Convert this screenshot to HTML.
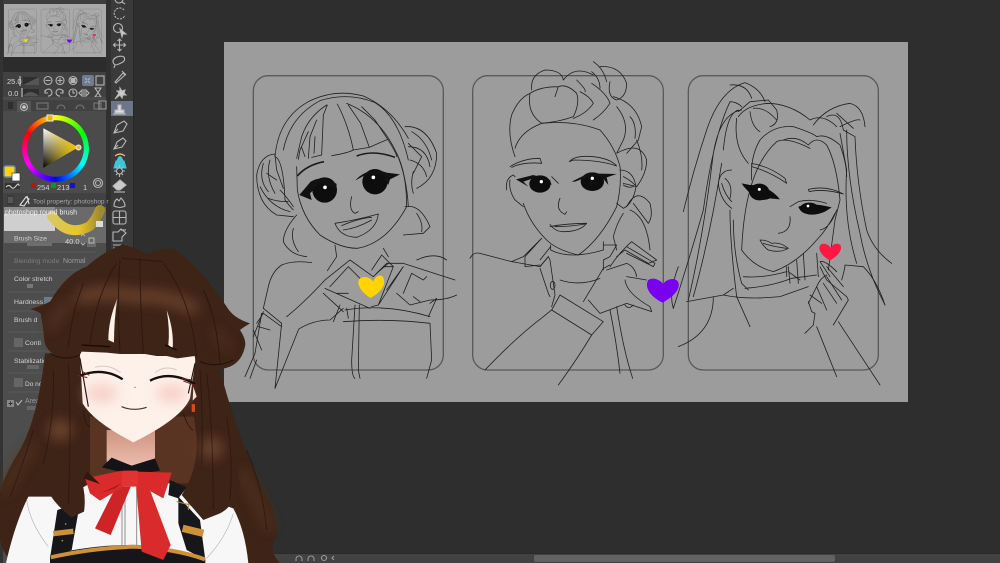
<!DOCTYPE html>
<html><head><meta charset="utf-8"><style>
html,body{margin:0;padding:0;background:#2e2e2e;width:1000px;height:563px;overflow:hidden}
svg{display:block;position:absolute;left:0;top:0;filter:blur(.3px)}
text{font-family:"Liberation Sans",sans-serif}
.l{fill:none;stroke:#1f1f1f;stroke-width:2.4;stroke-linecap:round;stroke-linejoin:round}
.f{fill:none;stroke:#5a5a5a;stroke-width:4}
.i{fill:none;stroke:#b4b4b4;stroke-width:1.1}
.t{fill:#d2d2d2;font-size:6.800px}
.h{fill:#3e2317}
</style></head><body>
<svg width="1000" height="563" viewBox="0 0 1000 563" xmlns="http://www.w3.org/2000/svg">
<defs>
<filter id="b2" filterUnits="userSpaceOnUse" x="-300" y="-300" width="1600" height="1600"><feGaussianBlur stdDeviation="10"/></filter>
<filter id="b3" filterUnits="userSpaceOnUse" x="-300" y="-300" width="1600" height="1600"><feGaussianBlur stdDeviation="20"/></filter>
<linearGradient id="tw" x1="0" y1="0" x2="0" y2="1"><stop offset="0" stop-color="#fff"/><stop offset="1" stop-color="#000"/></linearGradient>
<linearGradient id="ty" x1="0" y1="0" x2="1" y2="0"><stop offset="0" stop-color="#f5c800" stop-opacity="0"/><stop offset="1" stop-color="#f5c800"/></linearGradient>
<linearGradient id="neck" x1="0" y1="0" x2="0" y2="1"><stop offset="0" stop-color="#cf9482"/><stop offset="1" stop-color="#eebfae"/></linearGradient>
<linearGradient id="sw" x1="0" y1="0" x2="1" y2="0"><stop offset="0" stop-color="#d9c860"/><stop offset=".55" stop-color="#e8c52a"/><stop offset="1" stop-color="#a08c30"/></linearGradient>
</defs>

<rect width="1000" height="563" fill="#2e2e2e"/>
<rect x="0" y="0" width="133" height="563" fill="#3a3a3a"/>
<rect x="0" y="0" width="3" height="563" fill="#333"/>
<rect x="106" y="0" width="5" height="563" fill="#303030"/>
<rect x="133" y="0" width="1" height="563" fill="#262626"/>

<!-- navigator -->
<rect x="3" y="0" width="103" height="4" fill="#3d3d3d"/>
<rect x="4" y="4" width="102" height="53" fill="#a9a9a9"/>
<rect x="3" y="57" width="103" height="15" fill="#2c2c2c"/>
<g transform="translate(4,4) scale(.149) translate(-224,-42)"><use href="#art"/></g>

<!-- brush controls -->
<rect x="3" y="72" width="103" height="25" fill="#414141"/>
<rect x="23" y="77" width="16" height="8" fill="#2e2e2e"/><path d="M23 85L39 77V85Z" fill="#555"/>
<rect x="23" y="89" width="16" height="7" fill="#2e2e2e"/><path d="M23 96Q30 88 39 96Z" fill="#555"/>
<rect x="19" y="76" width="2" height="10" fill="#888"/><rect x="21" y="88" width="2" height="10" fill="#888"/>
<text x="7" y="84" fill="#d8d8d8" font-size="7.500">25.0</text>
<text x="8" y="96" fill="#d8d8d8" font-size="7.500">0.0</text>
<g class="i">
<circle cx="48" cy="80.500" r="4"/><path d="M45.500 80.500h5"/>
<circle cx="60" cy="80.500" r="4"/><path d="M57.500 80.500h5M60 78v5"/>
<circle cx="73" cy="80.500" r="4"/><rect x="71" y="78.500" width="4" height="4" fill="#b4b4b4"/>
<path d="M45 93a3.500 3.500 0 1 1 3 3M45 90v3h3M63 93a3.500 3.500 0 1 0-3 3M63 90v3h-3"/>
<circle cx="73" cy="93" r="4"/><path d="M73 90v3h2"/>
<path d="M84 89v8M82 90l-3 3 3 3zM86 90l3 3-3 3z"/>
<path d="M95 88h6l-6 9h6z"/>
<rect x="96" y="76" width="8" height="9"/>
</g>
<rect x="82" y="75" width="12" height="11" rx="2" fill="#6f7b91"/>
<path d="M85 78l2 2M90 78l-2 2M85 83l2-2M90 83l-2-2" class="i"/>

<!-- color panel -->
<rect x="3" y="97" width="103" height="96" fill="#4b4b4b"/>
<rect x="3" y="100" width="103" height="11" fill="#414141"/>
<rect x="8" y="102" width="5" height="7" fill="#2e2e2e"/>
<rect x="17" y="101" width="14" height="11" fill="#555"/><circle cx="24" cy="107" r="3.500" class="i"/><circle cx="24" cy="107" r="1.800" fill="#ccc"/>
<rect x="37" y="103" width="11" height="6" class="i" style="stroke:#777"/>
<path d="M57 109a4 4 0 0 1 8 0M76 109a4 4 0 0 1 8 0" class="i" style="stroke:#777"/>
<rect x="94" y="103" width="7" height="6" class="i" style="stroke:#777"/>
<rect x="99" y="101" width="7" height="8" class="i" style="stroke:#999"/>
<foreignObject x="22" y="115" width="67" height="67"><div xmlns="http://www.w3.org/1999/xhtml" style="width:67px;height:67px;border-radius:50%;background:conic-gradient(from 0deg,#ff0 0deg,#0f0 60deg,#0ff 120deg,#00f 180deg,#f0f 240deg,#f00 300deg,#ff0 360deg);-webkit-mask:radial-gradient(circle,transparent 28px,#000 28.500px);mask:radial-gradient(circle,transparent 28px,#000 28.500px)"></div></foreignObject>
<path d="M43.300 128.300L78.300 147.300L43.300 167.700Z" fill="url(#tw)"/>
<path d="M43.300 128.300L78.300 147.300L43.300 167.700Z" fill="url(#ty)"/>
<rect x="47" y="115" width="6" height="6" fill="#e8b800" stroke="#eee" stroke-width="1"/>
<circle cx="78.500" cy="147.500" r="2.500" fill="#f0c400" stroke="#eee" stroke-width="1"/>
<rect x="4" y="166" width="11" height="11" rx="2" fill="#ffd400" stroke="#7d89a0" stroke-width="1.500"/>
<rect x="12" y="173" width="8" height="8" fill="#fff" stroke="#333" stroke-width=".7"/>
<rect x="5" y="183" width="15" height="6" fill="#333"/><path d="M6 187q3-3 5 0t5-1 3 0" stroke="#ddd" fill="none" stroke-width="1"/>
<rect x="31" y="183" width="5" height="5" fill="#c01010"/><text x="37" y="190" class="t" style="font-size:7.500px">254</text>
<rect x="51" y="183" width="5" height="5" fill="#0a9a1a"/><text x="57" y="190" class="t" style="font-size:7.500px">213</text>
<rect x="70" y="183" width="5" height="5" fill="#1414c0"/><text x="83" y="190" class="t" style="font-size:7.500px">1</text>
<circle cx="98" cy="183" r="4.500" class="i"/><circle cx="98" cy="183" r="2.500" class="i"/>

<!-- tool property -->
<rect x="3" y="193" width="103" height="370" fill="#4d4d4d"/>
<rect x="3" y="193" width="103" height="14" fill="#424242"/>
<rect x="7" y="195" width="7" height="10" fill="#3a3a3a"/><path d="M8 198h5M8 200h5M8 202h5" stroke="#888" stroke-width=".7"/>
<path d="M20 205l6-8 3 2-5 7zM27 196l2 8" class="i" style="stroke:#ddd"/>
<text x="33" y="203.500" fill="#a8a8a8" font-size="6.500">Tool property: photoshop r</text>
<rect x="4" y="207" width="102" height="36" fill="#6a6a6a"/>
<rect x="4" y="207" width="51" height="7" fill="#8d8d8d"/>
<rect x="4" y="214" width="51" height="17" fill="#cfcfcf"/>
<path d="M52 216Q68 238 90 226Q96 220 100 210" fill="none" stroke="url(#sw)" stroke-width="10" stroke-linecap="round"/>
<text x="5" y="214.500" fill="#eee" font-size="7">photoshop round  brush</text>
<rect x="96" y="221" width="7" height="6" fill="#ddd"/>
<text x="14" y="240.500" class="t">Brush Size</text>
<rect x="27" y="243" width="25" height="3" fill="#6e6e6e"/>
<text x="65" y="244" class="t" style="font-size:7.500px">40.0</text>
<path d="M81 236l2-2 2 2M81 243l2 2 2-2" class="i"/>
<rect x="87" y="234" width="9" height="13" fill="#6a6a6a"/><rect x="89" y="238" width="5" height="5" class="i"/>
<path d="M8 252H96M8 270H96M8 292H96M8 311H96M8 332H96M8 351H96M8 373H96M8 392H96" stroke="#5e5e5e" stroke-width=".8"/>
<text x="14" y="263" fill="#7d7d7d" font-size="6.800">Blending mode</text>
<text x="63" y="263" fill="#9a9a9a" font-size="7">Normal</text>
<text x="14" y="281" class="t">Color stretch</text>
<rect x="27" y="284" width="6" height="4" fill="#777"/>
<text x="14" y="304" class="t">Hardness</text>
<rect x="44" y="297" width="9" height="8" fill="#6f7b91"/>
<text x="14" y="322" class="t">Brush d</text>
<rect x="14" y="338" width="9" height="9" fill="#666"/>
<text x="25" y="345" class="t">Conti</text>
<text x="14" y="363" class="t">Stabilization</text>
<rect x="27" y="365" width="12" height="4" fill="#666"/>
<rect x="14" y="378" width="9" height="9" fill="#666"/>
<text x="25" y="386" class="t" style="font-size:6.500px">Do not r</text>
<rect x="7" y="400" width="7" height="7" fill="#888"/><path d="M8.500 403.500h4M10.500 401.500v4" stroke="#333"/>
<path d="M16 402l2 3 4-5" class="i"/>
<text x="25" y="403" fill="#999" font-size="7">Area</text>
<rect x="27" y="406" width="12" height="4" fill="#666"/>

<!-- tool strip -->
<rect x="111" y="101" width="22" height="15" fill="#6c7589"/>
<g class="i" style="stroke-width:1.100;stroke:#b8b8b8">
<circle cx="119" cy="-1" r="4"/><path d="M122 2l3 2"/>
<path d="M124 10a5.500 5.500 0 1 0 1 5" stroke-dasharray="2 1.200"/>
<circle cx="118" cy="28" r="4.500"/><path d="M120 29l6 5-3 0-1 3z" fill="#ccc"/>
<path d="M119.500 39v12M113.500 45h12M117.500 41l2-2 2 2M117.500 49l2 2 2-2M115.500 43l-2 2 2 2M123.500 43l2 2-2 2"/>
<path d="M115 65q-4-4 0-7 5-3 9-1 2 4-3 6-4 2-6 2zM115 65l-1 3"/>
<path d="M115 82l8-9 2 2-9 8zM122 71l4 4"/>
<path d="M120 88l2 3 3-1-1 3 2 2-3 0-1 3-2-3-5 4 4-6-2-2 3 0z" fill="#ccc"/>
<path d="M115 113h9v-3h-3v-5h-3v5h-3z" fill="#ddd"/><path d="M113 114h13"/>
<path d="M114 133l3-8 7-4 3 3-4 7zM114 133l4-4"/>
<path d="M114 149l3-7 6-4 3 3-4 6zM114 149l4-4"/>
<path d="M114 168h12l-2-7h-8zM117 161q3-9 6 0" fill="#3ec6d8" style="stroke:#3ec6d8"/><path d="M115 156q5-4 10 0" style="stroke:#e8d060"/>
<circle cx="119.500" cy="171" r="3"/><path d="M119.500 165v3M119.500 174v3M114 171h3M122 171h3M116 167l2 2M123 167l-2 2M116 175l2-2M123 175l-2-2"/>
<path d="M113 186l7-6 6 5-6 5h-3z" fill="#ccc"/><path d="M114 192h11"/>
<path d="M114 206q0-5 3-7l2 2 2-3q4 4 4 8-5 3-11 0z"/>
<rect x="113" y="211" width="13" height="13" rx="2"/><path d="M113 217.500h13M119.500 211v13"/>
<path d="M113 238v-6h5l3-3 5 4-4 4v4h-9z"/><path d="M121 230h5"/>
</g>
<path d="M113 245h13M113 248h13" class="i"/>

<!-- canvas -->
<rect x="224" y="42" width="684" height="360" fill="#9c9c9c"/>

<g id="art">
<!-- FIGURE 1 -->
<g transform="translate(240,60) scale(.33333)">
<rect class="f" x="40" y="47" width="570" height="883" rx="45"/>
<g class="l">
<path d="M105 290Q115 175 205 125Q285 85 370 108Q455 145 505 235"/>
<path d="M130 270Q150 170 240 122Q325 95 405 128Q475 170 505 300"/>
<path d="M170 320L172 390Q185 470 240 525Q300 565 352 565Q440 550 500 440Q500 340 470 280"/>
<path d="M170 295L185 230Q205 170 260 135M320 130Q420 170 470 280"/>
<path d="M175 298L180 270L205 215M205 295L210 230L230 180M215 292L245 285L250 165L262 135M275 287Q320 280 340 270Q325 195 292 132M340 270L388 262L362 190L325 135M388 262L443 238L405 180L365 140M443 238Q470 280 470 290"/>
<path d="M185 262L195 290M225 230L222 280"/>
<path d="M105 290Q130 300 135 420Q150 440 160 450M470 280Q500 350 505 440"/>
<path d="M105 282Q60 285 50 345Q50 430 110 465L160 470"/>
<path d="M70 310Q55 360 85 395M90 300Q75 350 105 400M60 380Q90 440 150 455M120 390Q140 410 160 440M105 285L110 330L130 385M80 340L110 360M85 415Q110 425 145 425"/>
<path d="M495 200Q560 195 590 280Q590 355 530 385"/>
<path d="M515 215Q560 240 575 300M505 260Q560 260 570 320M510 300Q550 310 560 350M505 250L545 290L520 340M520 335Q510 370 520 400"/>
<path d="M170 465Q130 510 130 545Q150 585 200 590M160 505Q150 540 175 575"/>
<path d="M495 440Q540 430 570 500L550 520L490 525M530 460Q550 490 545 515"/>
<path d="M285 555L290 590L262 632M430 565L445 590"/>
<path d="M215 608Q160 600 125 615Q95 635 85 680L70 745"/>
<path d="M530 600Q585 575 620 600"/>
<path d="M70 745L125 790L105 985M70 755L40 830M65 760L45 880L15 950M30 955L50 900"/>
<path d="M105 985L175 810"/>
<path d="M50 790L70 760L125 800M40 810L65 870M55 800L90 810"/>
<path d="M175 808Q220 780 270 780L310 745M140 770Q190 730 255 660"/>
<path d="M255 660L330 600L400 650L440 610L490 610L645 660M270 680L325 620L395 690M255 685L390 745M290 700L325 700M250 700L310 755M300 735L280 785"/>
<path d="M395 630L425 585L460 620M410 640L445 610M430 620L460 620L415 735L395 740M440 690L490 620M415 735L490 620"/>
<path d="M490 700L515 640L550 660L560 650M470 700L510 735L570 720Q620 720 650 705M520 710L540 725"/>
<path d="M570 730L590 715L565 770"/>
<path d="M320 745L325 775M345 735L335 900Q335 950 345 955M358 735L355 930L360 955"/>
<path d="M315 750Q440 730 570 770M310 785Q440 775 570 790L575 900L560 955"/>
</g>
<path d="M172 348Q200 315 252 305" fill="none" stroke="#1a1a1a" stroke-width="5"/>
<path d="M350 288Q400 268 465 292" fill="none" stroke="#1a1a1a" stroke-width="4.500"/>
<ellipse cx="254" cy="390" rx="37" ry="38" fill="#0d0d0d"/><ellipse cx="405" cy="365" rx="38" ry="38" fill="#0d0d0d"/>
<path d="M178 405L212 365Q250 342 290 372L288 385L240 370L210 400L215 420Z" fill="#111"/>
<path d="M345 362Q385 318 440 338L480 343L450 358L445 375L430 345L385 340Z" fill="#111"/>
<circle cx="255" cy="382" r="5.500" fill="#fff"/><circle cx="400" cy="352" r="5.500" fill="#fff"/>
<g class="l">
<path d="M335 410Q325 450 345 460L355 455"/>
<path d="M285 490Q350 480 415 462Q410 510 350 532Q300 530 285 490Z"/>
<path d="M305 497Q355 475 395 472M310 510Q350 505 395 480"/>
</g>
<path d="M392 714C352 690 345 655 368 652C384 648 394 658 400 665C405 645 430 638 432 660C436 685 412 702 392 714Z" fill="#ffd400"/>
</g>

<!-- FIGURE 2 -->
<g transform="translate(460,60) scale(.33333)">
<rect class="f" x="38" y="47" width="572" height="883" rx="45"/>
<g class="l">
<path d="M165 290Q140 220 155 165Q175 115 210 100"/>
<path d="M215 90Q210 45 255 30Q305 30 310 60Q345 15 400 45M400 5Q430 25 440 65M395 35Q420 55 420 85M420 20Q480 15 500 70Q500 110 470 120Q440 110 450 65"/>
<path d="M295 80Q240 80 210 100Q200 160 245 190Q300 185 340 170Q360 130 350 100Q320 70 295 80Q290 95 285 110"/>
<path d="M360 95Q390 110 400 130Q380 160 340 175M350 60Q380 90 375 95M395 70Q440 100 450 130Q430 160 400 180M460 110Q530 130 545 200L535 240L500 280M510 170Q530 190 525 235"/>
<path d="M470 140Q510 190 490 240L470 280Q540 240 560 300Q560 340 530 380L490 370M530 240Q550 290 545 330"/>
<path d="M500 440Q530 380 570 430Q580 470 565 490L520 430M490 460Q470 490 460 530L470 570M510 450Q560 470 570 570"/>
<path d="M165 265Q180 215 245 190Q340 180 420 210Q465 260 480 320Q485 380 470 440Q420 540 355 585Q290 570 260 540Q210 490 190 430"/>
<path d="M140 390Q135 355 160 345L165 350M150 360Q145 390 165 420L190 440M480 330Q520 330 528 380Q520 430 490 445L470 430M490 350Q510 360 525 375M490 375Q505 385 520 380"/>
<path d="M150 320Q190 295 240 295L245 310Q190 305 155 322"/>
<path d="M328 305Q345 285 400 290Q450 295 470 318Q420 300 340 300Z"/>
<path d="M275 350L295 370M270 500Q320 490 380 490Q360 515 310 515Q285 515 270 493M285 500Q330 500 375 492"/>
<path d="M300 415Q285 450 315 463L320 455"/>
<path d="M272 555L272 570Q330 600 430 570L430 545M272 560L240 600M300 660Q360 680 420 655M265 590L240 620"/>
<path d="M155 605L190 590L245 535L195 590L195 620L240 615M430 555L470 555L450 590L430 600L430 630"/>
<path d="M30 595Q40 575 60 580L155 605L240 620L265 590L270 600L285 705L275 740"/>
<path d="M240 625L265 700L270 710"/>
<ellipse cx="278" cy="676" rx="7" ry="12"/>
<path d="M75 930Q170 830 250 770L275 750L300 705L430 785L395 825L275 750"/>
<path d="M395 825Q350 900 295 975"/>
<path d="M370 725L430 625L450 615"/>
<path d="M450 620Q480 575 515 545L590 600L565 610L495 570L470 590M500 560L585 610L580 620L500 580M440 630Q470 620 500 610Q525 620 530 650M500 650L560 660M495 660Q500 700 570 740L575 755L500 730L420 760L385 720"/>
<path d="M450 750Q470 850 480 940M470 740Q490 870 518 955M495 735Q505 750 520 735"/>
<path d="M640 745Q625 700 655 620"/>
</g>
<ellipse cx="240" cy="372" rx="32" ry="26" fill="#0d0d0d"/><ellipse cx="397" cy="365" rx="35" ry="28" fill="#0d0d0d"/>
<path d="M168 358L220 345L270 360L275 375L235 350L190 365L205 380Z" fill="#111"/>
<path d="M335 365L385 340L470 342L440 352L445 375L425 350L390 348L345 365Z" fill="#111"/>
<circle cx="244" cy="365" r="5" fill="#fff"/><circle cx="397" cy="355" r="5" fill="#fff"/>
<path d="M608 728C570 710 552 680 565 660C580 650 600 660 610 672C620 655 650 650 656 670C660 695 630 715 608 728Z" fill="#7a00f0"/>
</g>

<!-- FIGURE 3 -->
<g transform="translate(670,70) scale(.33333)">
<rect class="f" x="55" y="17" width="570" height="883" rx="45"/>
<g class="l">
<path d="M40 425Q70 300 110 180Q150 60 225 38Q270 55 285 95M180 45Q230 40 245 85M10 715Q60 560 100 420Q130 200 180 95Q200 95 215 110M55 690Q100 500 130 250Q150 130 215 120M70 680Q120 500 155 280"/>
<path d="M205 125L240 95L295 90L320 120Q330 160 300 170M205 140Q230 105 295 100M240 125Q245 170 270 185M250 115Q285 110 320 150"/>
<path d="M200 145Q190 230 235 280M160 240Q170 130 205 120"/>
<path d="M290 100Q360 100 420 150Q460 130 500 170M430 165Q470 110 540 100Q580 110 585 170M470 140Q510 120 520 180M500 130L550 175M510 170Q560 145 570 150"/>
<path d="M520 180L555 200Q560 340 590 480Q610 540 665 580M530 180Q530 320 570 490Q590 600 645 705M510 190L530 300Q520 450 560 580"/>
<path d="M245 330Q240 260 270 210Q310 165 370 170Q430 190 440 200Q470 190 510 225Q530 280 530 320"/>
<path d="M180 420Q180 520 200 680L240 770M215 540Q225 300 320 215Q350 200 420 235M190 450Q190 550 215 640L235 660M340 210Q380 195 415 225Q440 195 470 225Q500 280 510 390L495 450L475 600"/>
<path d="M185 300Q150 300 145 340Q150 390 185 415M155 340Q165 375 185 395M165 325Q190 345 180 385"/>
<path d="M215 540Q250 590 310 605Q380 580 440 510Q470 480 495 430M500 420Q480 475 450 480M350 590V620M355 605L390 630"/>
<path d="M245 280Q300 290 345 325L350 340Q300 305 245 290Z M415 358Q470 345 520 372Q460 355 418 365Z"/>
<path d="M360 440Q365 485 325 490M360 410L385 395Q420 385 470 400"/>
<path d="M270 510Q290 510 305 520Q330 515 355 535Q330 550 295 540Q280 530 270 510ZM280 520Q310 530 350 535"/>
<path d="M220 620Q280 625 350 605M225 655Q300 650 365 625L440 615M160 675Q230 690 330 680L415 650M50 695L160 675L190 655M130 680Q130 790 25 830"/>
<path d="M380 570L385 640M400 550L405 630M440 550L445 620M355 590L360 640"/>
<path d="M450 590L470 630L530 680L535 690L490 765M470 590L520 650M525 585L580 590Q620 630 645 705M515 630Q525 595 525 585M480 620L450 575Q465 570 500 605M440 650L470 720M420 675L455 700M415 700Q420 690 440 650M415 695L425 725L435 730L430 765L405 790M440 770L500 920M505 755L630 945"/>
<path d="M460 640L500 700M470 620L515 690M440 650Q450 625 470 615"/>
</g>
<path d="M215 340L240 345Q295 345 330 388L300 385Q280 395 255 385Q235 365 220 348Z" fill="#0d0d0d"/>
<ellipse cx="268" cy="366" rx="30" ry="25" fill="#0d0d0d"/>
<path d="M385 410Q420 395 485 412L465 425Q430 440 405 430Q390 425 385 410Z" fill="#0d0d0d"/>
<ellipse cx="418" cy="415" rx="28" ry="17" fill="#0d0d0d"/>
<circle cx="268" cy="358" r="4.500" fill="#fff"/><circle cx="414" cy="408" r="4" fill="#fff"/>
<path d="M480 572C450 555 440 530 455 522C470 518 478 528 482 533C490 518 515 515 513 535C510 552 495 562 480 572Z" fill="#ff1744"/>
</g>
</g>

<!-- bottom bar -->
<rect x="134" y="554" width="866" height="9" fill="#424242"/>
<rect x="134" y="553" width="866" height="1" fill="#2a2a2a"/>
<rect x="534" y="555" width="301" height="7" rx="2" fill="#626262"/>
<g class="i" style="stroke:#999">
<path d="M296 561v-2a3 3 0 0 1 6 0v2M308 561v-2a3 3 0 0 1 6 0v2"/>
<circle cx="324" cy="558" r="2.500"/><path d="M334 556l-2 2 2 2"/>
</g>

<!-- VTUBER -->
<g transform="translate(0,230) scale(.33333)">
<path class="h" d="M135 370Q115 560 60 660Q10 740 0 790V930Q10 970 30 990H120L240 800H560L740 999H840Q800 960 830 920Q835 870 810 820Q720 650 660 420Z"/>
<path d="M270 560H590V760H270Z" fill="#5a3423"/>
<path d="M10 790Q50 710 110 640" stroke="#50301f" stroke-width="26" fill="none" filter="url(#b3)"/>
<path d="M720 720Q770 800 810 900" stroke="#50301f" stroke-width="28" fill="none" filter="url(#b3)"/>
<path d="M320 600V695L395 715L465 695V600Z" fill="url(#neck)"/>
<path d="M85 800Q45 880 18 999H745Q735 900 700 835L600 800L510 760H270L200 800Z" fill="#f7f7f7"/>
<path d="M80 810Q90 880 145 950" stroke="#b5b5b5" stroke-width="2" fill="none"/>
<path d="M700 850Q680 920 620 985" stroke="#b5b5b5" stroke-width="2" fill="none"/>
<path d="M172 840L240 818L215 960L150 985Z" fill="#17171b"/>
<path d="M535 800L600 870L616 990L560 960L535 880Z" fill="#17171b"/>
<path d="M150 999V975Q270 945 400 945Q520 950 616 990V999Z" fill="#15151a"/>
<path d="M152 982Q270 955 400 950Q520 955 615 988" stroke="#cd9138" stroke-width="12" fill="none"/>
<path d="M160 911L220 904" stroke="#cd9138" stroke-width="16" fill="none"/>
<path d="M548 895L610 910" stroke="#cd9138" stroke-width="22" fill="none"/>
<path d="M530 815L590 830M565 815V840" stroke="#a8894f" stroke-width="3" fill="none"/>
<circle cx="197" cy="882" r="2.500" fill="#b09040"/><circle cx="187" cy="932" r="2.500" fill="#b09040"/>
<path d="M366 775V945M375 775V945M410 775V945" stroke="#8f8f8f" stroke-width="3" fill="none"/>
<path d="M305 712L335 683L395 707L465 685L480 722L400 735Z" fill="#141418"/>
<path d="M510 750L560 772L535 805L505 795Z" fill="#17171b"/>
<path d="M408 762H443L512 945L490 990L425 965Z" fill="#d92a2c"/>
<path d="M348 770H392L332 915L285 895Z" fill="#cf2427"/>
<path d="M255 745L365 722L370 770L300 812L270 790Z" fill="#d92a2c"/>
<path d="M412 725L515 728L490 805L412 762Z" fill="#d92a2c"/>
<path d="M300 790L365 760L345 775Z" fill="#a81a1e"/>
<rect x="365" y="722" width="50" height="48" rx="6" fill="#e13234"/>
<path class="h" d="M145 370L240 390L240 520Q255 640 240 740Q260 790 252 845L215 862Q130 800 115 700Q130 560 145 370Z"/>
<path class="h" d="M585 400Q570 510 590 620Q595 720 545 795L610 870L660 850Q700 830 720 770Q700 600 650 420Z"/>
<path d="M250 745L300 762L262 725Z" fill="#2e1810"/>
<ellipse cx="180" cy="600" rx="36" ry="30" fill="#6d452e" filter="url(#b3)"/>
<ellipse cx="635" cy="655" rx="34" ry="32" fill="#6d452e" filter="url(#b3)"/>
<path d="M160 420Q165 560 130 700M205 400Q215 580 205 820M620 430Q640 600 640 840M600 420Q610 560 605 700M680 560Q700 680 690 810M100 600Q70 700 30 800M740 660Q790 780 800 900" stroke="#2a150d" stroke-width="3" fill="none" opacity=".7"/>
<path d="M238 340H590L585 400L570 505Q545 565 400 637Q280 575 248 520Z" fill="#fdf1ea"/>
<ellipse cx="305" cy="490" rx="48" ry="26" fill="#f6c4bc" opacity=".8" filter="url(#b3)"/>
<ellipse cx="515" cy="490" rx="45" ry="26" fill="#f6c4bc" opacity=".8" filter="url(#b3)"/>
<path d="M240 385L265 530M585 400L565 490" stroke="#2a1610" stroke-width="3.500" fill="none"/>
<path d="M250 540Q255 585 270 590M550 550Q565 595 580 600" stroke="#2a1610" stroke-width="2.500" fill="none"/>
<path d="M285 412Q325 400 362 428M465 428Q495 405 530 420" stroke="#d8c8c0" stroke-width="3" fill="none"/>
<path d="M240 437Q310 410 368 448" stroke="#14100e" stroke-width="7" fill="none"/>
<path d="M450 452Q510 420 585 462" stroke="#14100e" stroke-width="7" fill="none"/>
<path d="M248 425L268 436M235 437L262 443M545 446L580 450M550 453L585 466" stroke="#7b2a20" stroke-width="3" fill="none"/>
<ellipse cx="405" cy="472" rx="3" ry="2.500" fill="#b9a49b"/>
<path d="M365 530Q400 545 440 532" stroke="#4a3030" stroke-width="3.500" fill="none"/>
<path d="M580 470L590 500L578 512Z" fill="#f7e3da"/>
<rect x="575" y="522" width="10" height="24" rx="3" fill="#d64a22"/>
<path class="h" d="M90 238Q130 225 150 215Q200 130 260 110Q310 65 370 42Q420 60 438 72Q480 55 520 55Q600 110 680 230Q700 265 750 280Q725 295 720 300Q740 330 735 350Q725 395 690 410Q650 425 620 418L587 395L584 378L532 385L500 378L470 378L435 372L385 372L360 372L320 368L245 365L238 378Q200 395 170 378Q135 360 133 330Q130 290 122 250Q105 240 90 238Z"/>
<path d="M352 205Q325 270 325 330L342 338Q342 270 352 205Z" fill="#fdf1ea"/>
<path d="M500 240Q522 300 518 355L505 345Q510 300 500 240Z" fill="#fdf1ea"/>
<path d="M230 205Q320 175 400 200Q500 190 590 240" stroke="#6f452f" stroke-width="34" fill="none" filter="url(#b3)"/>
<path d="M150 300Q170 250 210 215" stroke="#5f3a28" stroke-width="18" fill="none" filter="url(#b3)"/>
<path d="M640 300Q670 330 690 360" stroke="#553322" stroke-width="18" fill="none" filter="url(#b3)"/>
<path d="M350 100Q290 190 270 340M490 100Q570 200 590 380M420 85Q420 220 430 370M360 90Q350 230 360 365" stroke="#2a150d" stroke-width="3" fill="none" opacity=".8"/>
<path d="M250 160Q215 250 205 350M610 180Q650 260 660 400M365 85L490 95" stroke="#2a150d" stroke-width="3" fill="none" opacity=".8"/>
<path d="M150 370Q190 395 240 375M600 395Q650 415 700 390" stroke="#24120b" stroke-width="3.500" fill="none"/>
<path d="M245 345L330 350M495 345L530 360" stroke="#140b08" stroke-width="4" fill="none"/>
</g>
</svg>
</body></html>
